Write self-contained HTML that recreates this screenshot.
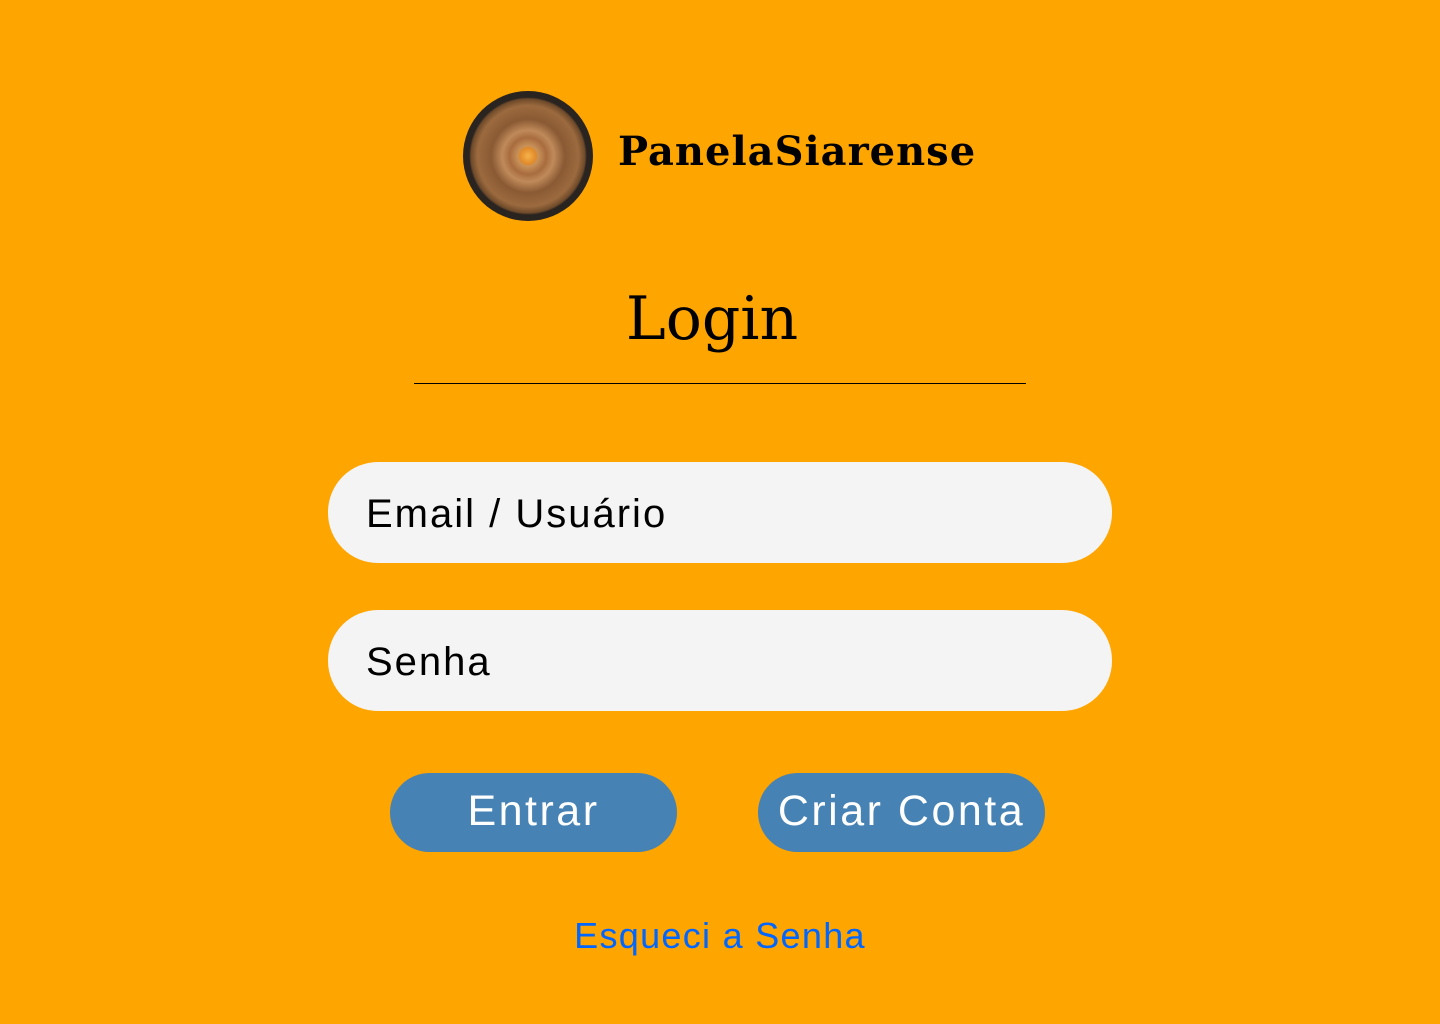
<!DOCTYPE html>
<html><head><meta charset="utf-8"><style>
body{margin:0;width:1440px;height:1024px;background:#FFA500;position:relative;font-family:"Liberation Sans",sans-serif;overflow:hidden}
.abs{position:absolute}
.logo{left:463px;top:91px;width:130px;height:130px;border-radius:50%;background:radial-gradient(circle,#f6b24a 0,#e08a2a 9%,#c9925a 11%,#a86c3e 20%,#c08a5a 28%,#8a5a34 40%,#9c6a3e 55%,#6e4a2a 62%,#2a2420 64%)}
.brand{left:618px;top:128px;font-family:"DejaVu Serif",serif;font-weight:bold;font-size:40px;letter-spacing:1px;color:#000}
.title{left:-8px;width:1440px;top:284px;text-align:center;font-family:"DejaVu Serif",serif;font-size:60px;color:#000}
.line{left:414px;top:383px;width:612px;height:1px;background:#000}
.inp{left:328px;width:784px;height:101px;border-radius:50px;background:#f4f4f4;font-size:40px;letter-spacing:2px;line-height:104px;box-sizing:border-box;padding-left:38px;color:#000}
.btn{top:773px;width:287px;height:79px;border-radius:40px;background:#4682B4;color:#fff;font-size:43px;letter-spacing:2.5px;line-height:77px;text-align:center}
.link{left:0;width:1440px;top:915px;text-align:center;color:#0066ff;font-size:36px;letter-spacing:1.3px}
</style></head><body>
<div class="abs logo"></div>
<div class="abs brand">PanelaSiarense</div>
<div class="abs title">Login</div>
<div class="abs line"></div>
<div class="abs inp" style="top:462px">Email / Usuário</div>
<div class="abs inp" style="top:610px">Senha</div>
<div class="abs btn" style="left:390px">Entrar</div>
<div class="abs btn" style="left:758px">Criar Conta</div>
<div class="abs link">Esqueci a Senha</div>
</body></html>
